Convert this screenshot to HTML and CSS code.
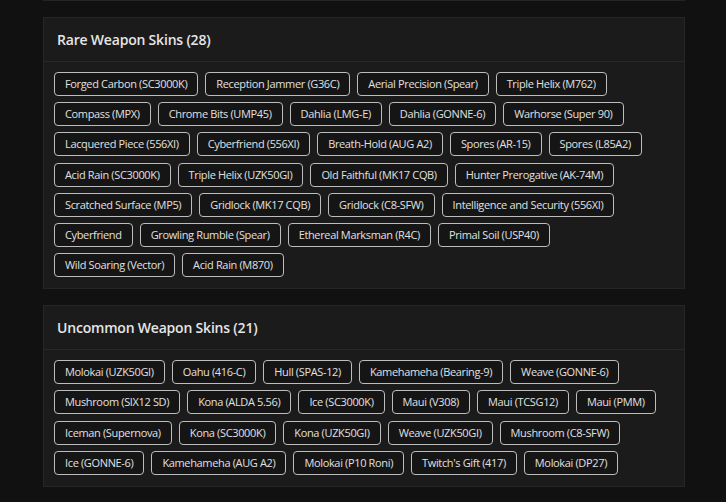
FILE: index.html
```html
<!DOCTYPE html>
<html lang="en">
<head>
    <meta charset="UTF-8">
    <meta name="viewport" content="width=device-width, initial-scale=1.0">
    <title>Weapon Skins</title>
    <link rel="stylesheet" href="styles.css">
</head>
<body>
    <div class="container">
        <div class="card card-stub"></div>

        <div class="card">
            <div class="card-header">
                <h2>Rare Weapon Skins (28)</h2>
            </div>
            <div class="card-body">
                <span class="skin">Forged Carbon (SC3000K)</span>
                <span class="skin">Reception Jammer (G36C)</span>
                <span class="skin">Aerial Precision (Spear)</span>
                <span class="skin">Triple Helix (M762)</span>
                <span class="skin">Compass (MPX)</span>
                <span class="skin">Chrome Bits (UMP45)</span>
                <span class="skin">Dahlia (LMG-E)</span>
                <span class="skin">Dahlia (GONNE-6)</span>
                <span class="skin">Warhorse (Super 90)</span>
                <span class="skin">Lacquered Piece (556XI)</span>
                <span class="skin">Cyberfriend (556XI)</span>
                <span class="skin">Breath-Hold (AUG A2)</span>
                <span class="skin">Spores (AR-15)</span>
                <span class="skin">Spores (L85A2)</span>
                <span class="skin">Acid Rain (SC3000K)</span>
                <span class="skin">Triple Helix (UZK50GI)</span>
                <span class="skin">Old Faithful (MK17 CQB)</span>
                <span class="skin">Hunter Prerogative (AK-74M)</span>
                <span class="skin">Scratched Surface (MP5)</span>
                <span class="skin">Gridlock (MK17 CQB)</span>
                <span class="skin">Gridlock (C8-SFW)</span>
                <span class="skin">Intelligence and Security (556XI)</span>
                <span class="skin">Cyberfriend</span>
                <span class="skin">Growling Rumble (Spear)</span>
                <span class="skin">Ethereal Marksman (R4C)</span>
                <span class="skin">Primal Soil (USP40)</span>
                <span class="skin">Wild Soaring (Vector)</span>
                <span class="skin">Acid Rain (M870)</span>
            </div>
        </div>

        <div class="card">
            <div class="card-header">
                <h2>Uncommon Weapon Skins (21)</h2>
            </div>
            <div class="card-body">
                <span class="skin">Molokai (UZK50GI)</span>
                <span class="skin">Oahu (416-C)</span>
                <span class="skin">Hull (SPAS-12)</span>
                <span class="skin">Kamehameha (Bearing-9)</span>
                <span class="skin">Weave (GONNE-6)</span>
                <span class="skin">Mushroom (SIX12 SD)</span>
                <span class="skin">Kona (ALDA 5.56)</span>
                <span class="skin">Ice (SC3000K)</span>
                <span class="skin">Maui (V308)</span>
                <span class="skin">Maui (TCSG12)</span>
                <span class="skin">Maui (PMM)</span>
                <span class="skin">Iceman (Supernova)</span>
                <span class="skin">Kona (SC3000K)</span>
                <span class="skin">Kona (UZK50GI)</span>
                <span class="skin">Weave (UZK50GI)</span>
                <span class="skin">Mushroom (C8-SFW)</span>
                <span class="skin">Ice (GONNE-6)</span>
                <span class="skin">Kamehameha (AUG A2)</span>
                <span class="skin">Molokai (P10 Roni)</span>
                <span class="skin">Twitch's Gift (417)</span>
                <span class="skin">Molokai (DP27)</span>
            </div>
        </div>
    </div>
</body>
</html>
```

FILE: styles.css
```css
body {
    font-family: "Open Sans", Arial, sans-serif;
    margin: 0;
    padding: 0;
    background-color: #111111;
    color: #e2e2e2;
}
.container {
    width: 642px;
    margin: 0 0 0 43px;
    display: flex;
    flex-direction: column;
    gap: 16px;
}
.card {
    background-color: #1b1b1b;
    border: 1px solid #252525;
}
.card-stub {
    border-top: none;
    height: 0;
}
.card-header {
    height: 43px;
    padding: 0 13px;
    display: flex;
    align-items: center;
    border-bottom: 1px solid #282828;
}
.card-header h2 {
    margin: 0;
    font-size: 14px;
    font-weight: 600;
    letter-spacing: -0.2px;
    color: #e6e6e6;
}
.card-body {
    display: flex;
    flex-wrap: wrap;
    gap: 6.2px 7px;
    padding: 10px 10px 11px 10px;
}
.skin {
    display: inline-block;
    height: 22px;
    line-height: 22px;
    padding: 0 10px;
    font-size: 11px;
    letter-spacing: -0.35px;
    color: #e0e0e0;
    border: 1px solid #bdbdbd;
    border-radius: 4px;
    background-color: #151515;
    white-space: nowrap;
}
```
